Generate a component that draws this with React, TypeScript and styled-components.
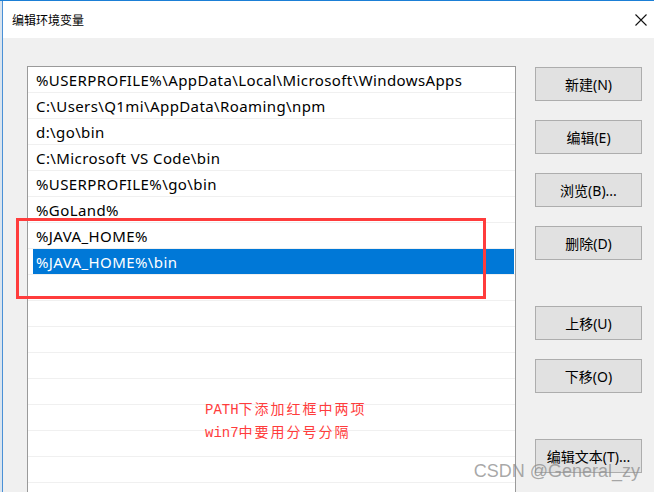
import React from "react";
import styled, { createGlobalStyle } from "styled-components";

const GlobalStyle = createGlobalStyle`
  html, body { margin: 0; padding: 0; background: #f0f0f0; }
  * { box-sizing: border-box; }
`;

const uiFont = `"Noto Sans", "Noto Sans CJK SC", sans-serif`;

const Page = styled.div`
  position: relative;
  width: 654px;
  height: 492px;
  overflow: hidden;
  display: flex;
  background: #f0f0f0;
  border-top: 1px solid #1b7fd6;
  font-family: ${uiFont};
`;

const BehindEdge = styled.div`
  width: 2px;
  flex: none;
  background: #d9e4ef;
`;

const Window = styled.div`
  flex: 1;
  min-height: 0;
  display: flex;
  flex-direction: column;
  border-left: 1px solid #4a90d6;
  background: #f0f0f0;
`;

const TitleBar = styled.div`
  height: 37px;
  flex: none;
  background: #ffffff;
  display: flex;
  align-items: center;
  justify-content: space-between;
  padding: 0 7px 0 9px;
`;

const Title = styled.span`
  font-family: "Noto Sans CJK SC", sans-serif;
  font-size: 12px;
  color: #000;
`;

const CloseIcon = styled.svg`
  width: 12px;
  height: 12px;
  display: block;
`;

const Body = styled.div`
  flex: 1;
  min-height: 0;
  overflow: hidden;
  display: flex;
  align-items: flex-start;
  gap: 19px;
  padding: 28px 0 0 24px;
`;

const ListBox = styled.div`
  width: 489px;
  height: 460px;
  flex: none;
  background: #ffffff;
  border: 1px solid #9a9a9a;
  display: flex;
  flex-direction: column;
`;

const Row = styled.div`
  height: 26px;
  flex: none;
  display: flex;
  border-bottom: 1px solid #f0f0f0;
  padding-left: 1px;
`;

const Cell = styled.div<{ $selected?: boolean }>`
  flex: 1;
  display: flex;
  align-items: center;
  margin-left: 4px;
  margin-right: 1px;
  padding-left: 3px;
  font-size: 15px;
  letter-spacing: 0.4px;
  color: ${(p) => (p.$selected ? "#ffffff" : "#000000")};
  background: ${(p) => (p.$selected ? "#0078d7" : "transparent")};
  white-space: nowrap;
`;

const Buttons = styled.div`
  display: flex;
  flex-direction: column;
  gap: 19px;
  margin-top: 1px;
  width: 107px;
  flex: none;
`;

const Button = styled.div<{ $spaced?: boolean }>`
  height: 34px;
  flex: none;
  margin-top: ${(p) => (p.$spaced ? "27px" : "0")};
  background: #e1e1e1;
  border: 1px solid #adadad;
  display: flex;
  align-items: center;
  justify-content: center;
  font-size: 14px;
  color: #000;
`;

const RedFrame = styled.div`
  position: absolute;
  left: 16px;
  top: 217px;
  width: 470px;
  height: 81px;
  border: 3px solid #ff3c3c;
`;

const Note = styled.div`
  position: absolute;
  left: 205px;
  top: 397px;
  color: #ff3c3c;
  font-family: "Noto Sans CJK SC", sans-serif;
  font-size: 14px;
  line-height: 21px;
  letter-spacing: 2px;
  white-space: nowrap;
`;

const Mono = styled.span`
  font-family: "Liberation Mono", monospace;
  letter-spacing: 0;
`;

const Watermark = styled.div`
  position: absolute;
  right: 14px;
  top: 459px;
  font-family: "Liberation Sans", sans-serif;
  font-size: 18px;
  line-height: 22px;
  color: rgba(140, 140, 140, 0.75);
  white-space: nowrap;
`;

const entries = [
  "%USERPROFILE%\\AppData\\Local\\Microsoft\\WindowsApps",
  "C:\\Users\\Q1mi\\AppData\\Roaming\\npm",
  "d:\\go\\bin",
  "C:\\Microsoft VS Code\\bin",
  "%USERPROFILE%\\go\\bin",
  "%GoLand%",
  "%JAVA_HOME%",
  "%JAVA_HOME%\\bin",
];

const selectedIndex = 7;
const totalRows = 18;

export default function App() {
  const rows = Array.from({ length: totalRows }, (_, i) => entries[i] ?? "");
  return (
    <>
      <GlobalStyle />
      <Page>
        <BehindEdge />
        <Window>
          <TitleBar>
            <Title>编辑环境变量</Title>
            <CloseIcon viewBox="0 0 12 12">
              <path d="M0.5 0.5 L11.5 11.5 M11.5 0.5 L0.5 11.5" stroke="#111" strokeWidth="1.1" fill="none" />
            </CloseIcon>
          </TitleBar>
          <Body>
            <ListBox>
              {rows.map((t, i) => (
                <Row key={i}>
                  <Cell $selected={i === selectedIndex}>{t}</Cell>
                </Row>
              ))}
            </ListBox>
            <Buttons>
              <Button>新建(N)</Button>
              <Button>编辑(E)</Button>
              <Button>浏览(B)...</Button>
              <Button>删除(D)</Button>
              <Button $spaced>上移(U)</Button>
              <Button>下移(O)</Button>
              <Button $spaced>编辑文本(T)...</Button>
            </Buttons>
          </Body>
        </Window>
        <RedFrame />
        <Note>
          <div>
            <Mono>PATH</Mono>下添加红框中两项
          </div>
          <div>
            <Mono>win7</Mono>中要用分号分隔
          </div>
        </Note>
        <Watermark>CSDN @General_zy</Watermark>
      </Page>
    </>
  );
}
